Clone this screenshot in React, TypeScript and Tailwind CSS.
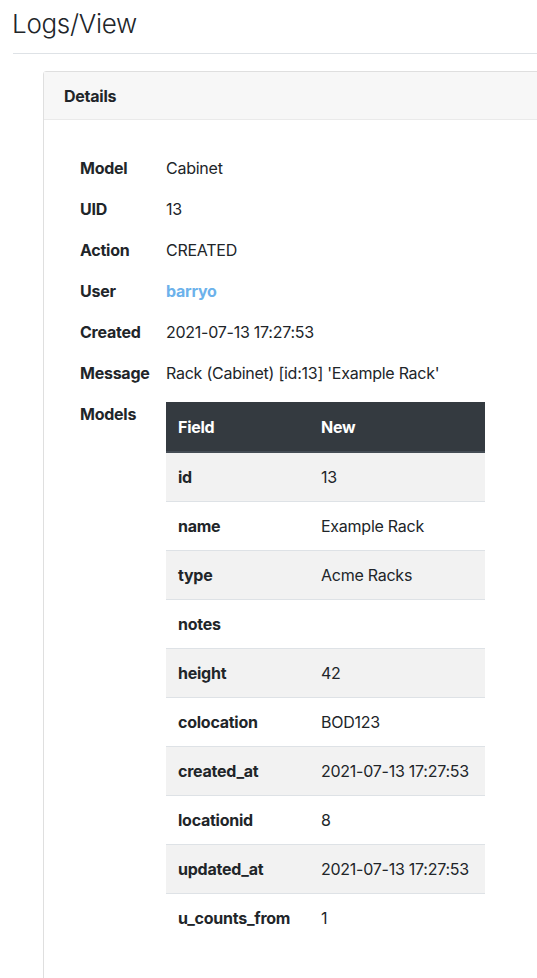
const details = [
  { label: 'Model', value: 'Cabinet' },
  { label: 'UID', value: '13' },
  { label: 'Action', value: 'CREATED' },
  { label: 'User', value: 'barryo', link: true },
  { label: 'Created', value: '2021-07-13 17:27:53' },
  { label: 'Message', value: "Rack (Cabinet) [id:13] 'Example Rack'" },
];

const fields = [
  ['id', '13'],
  ['name', 'Example Rack'],
  ['type', 'Acme Racks'],
  ['notes', ''],
  ['height', '42'],
  ['colocation', 'BOD123'],
  ['created_at', '2021-07-13 17:27:53'],
  ['locationid', '8'],
  ['updated_at', '2021-07-13 17:27:53'],
  ['u_counts_from', '1'],
];

export default function App() {
  return (
    <div
      className="min-h-[978px] overflow-hidden bg-white text-[16px] leading-6 tracking-[-0.25px] text-[#212529]"
      style={{ fontFamily: 'Inter, "Liberation Sans", sans-serif' }}
    >
      <div className="pl-3">
        <h3 className="pt-[7px] pb-[13px] text-[26px] font-light leading-[33px] tracking-[-0.3px]">Logs/View</h3>
        <div className="ml-px border-t border-[#dee2e6]" />

        <div className="ml-[31px] mt-[17px] w-[600px] border border-[rgba(0,0,0,0.125)] rounded-[3px]">
          <div className="h-[48px] border-b border-[rgba(0,0,0,0.05)] bg-[#f7f7f7] px-5 py-3 font-bold">
            Details
          </div>

          <div className="pl-[28px] pt-[27px] pb-10">
            <table className="border-collapse">
              <tbody>
                {details.map((d) => (
                  <tr key={d.label}>
                    <td className="w-[86px] px-2 py-2 align-top font-bold border-t border-transparent">{d.label}</td>
                    <td className="px-2 py-2 align-top whitespace-nowrap border-t border-transparent">
                      {d.link ? (
                        <a className="font-bold text-[#6cb2eb]">{d.value}</a>
                      ) : (
                        d.value
                      )}
                    </td>
                  </tr>
                ))}
                <tr>
                  <td className="w-[86px] px-2 py-2 align-top font-bold border-t border-transparent">Models</td>
                  <td className="px-2 py-2 align-top border-t border-transparent">
                    <table className="w-[319px] border-collapse">
                      <thead>
                        <tr className="bg-[#343a40] text-white">
                          <th className="w-[143px] border-b-2 border-[#454d55] px-3 pt-[13px] pb-3 text-left font-bold">Field</th>
                          <th className="border-b-2 border-[#454d55] px-3 pt-[13px] pb-3 text-left font-bold">New</th>
                        </tr>
                      </thead>
                      <tbody>
                        {fields.map(([k, v], i) => (
                          <tr key={k} className={i % 2 === 0 ? 'bg-[#f2f2f2]' : ''}>
                            <td className={`p-3 font-bold ${i === 0 ? '' : 'border-t border-[#dee2e6]'}`}>{k}</td>
                            <td className={`p-3 whitespace-nowrap ${i === 0 ? '' : 'border-t border-[#dee2e6]'}`}>{v}</td>
                          </tr>
                        ))}
                      </tbody>
                    </table>
                  </td>
                </tr>
              </tbody>
            </table>
          </div>
        </div>
      </div>
    </div>
  );
}
